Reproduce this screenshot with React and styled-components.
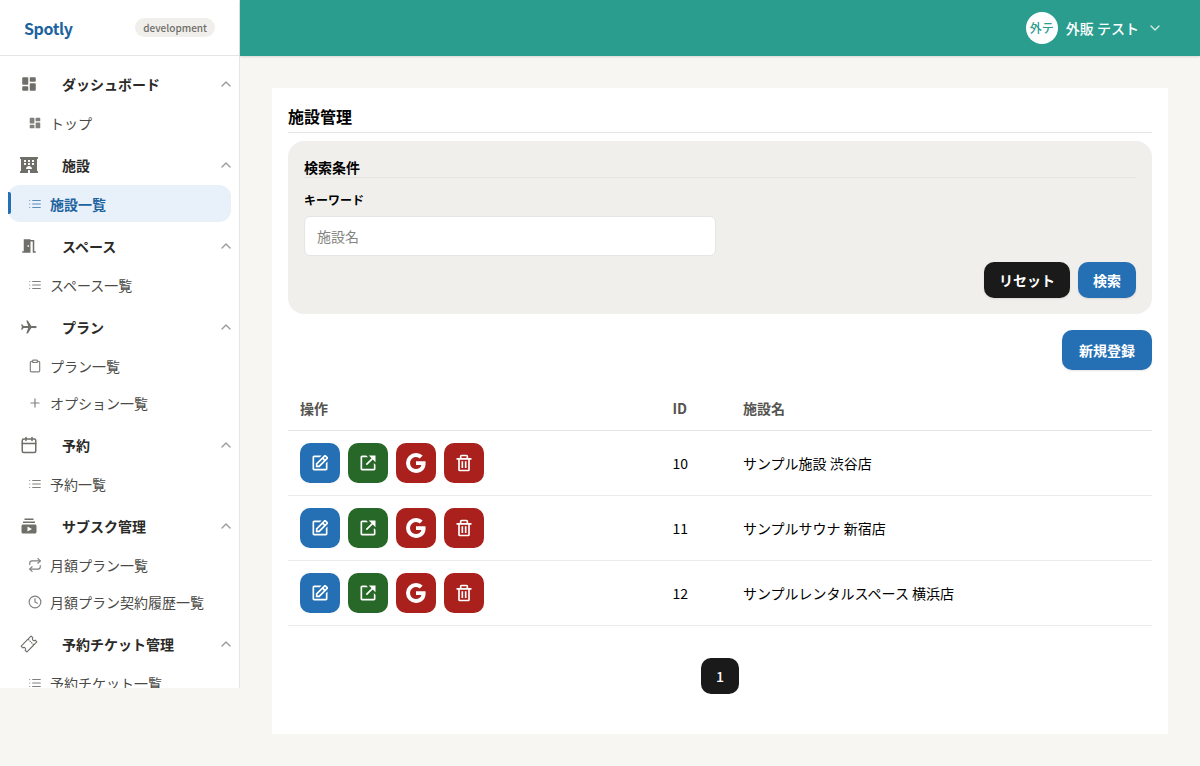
import React from "react";
import styled, { createGlobalStyle } from "styled-components";
import { RiDashboardFill } from "react-icons/ri";
import { FaHotel } from "react-icons/fa";
import { MdSubscriptions, MdMeetingRoom } from "react-icons/md";
import { IoIosAirplane } from "react-icons/io";
import { IoTicketOutline } from "react-icons/io5";
import {
  FiCalendar,
  FiChevronDown,
  FiChevronUp,
  FiClipboard,
  FiClock,
  FiList,
  FiPlus,
  FiRepeat,
} from "react-icons/fi";
import { BiEdit, BiLinkExternal, BiTrash } from "react-icons/bi";
import { BsGoogle } from "react-icons/bs";

const menu = [
  {
    title: "ダッシュボード",
    icon: RiDashboardFill,
    items: [{ label: "トップ", icon: RiDashboardFill }],
  },
  {
    title: "施設",
    icon: FaHotel,
    items: [{ label: "施設一覧", icon: FiList, active: true }],
  },
  {
    title: "スペース",
    icon: MdMeetingRoom,
    items: [{ label: "スペース一覧", icon: FiList }],
  },
  {
    title: "プラン",
    icon: IoIosAirplane,
    items: [
      { label: "プラン一覧", icon: FiClipboard },
      { label: "オプション一覧", icon: FiPlus },
    ],
  },
  {
    title: "予約",
    icon: FiCalendar,
    items: [{ label: "予約一覧", icon: FiList }],
  },
  {
    title: "サブスク管理",
    icon: MdSubscriptions,
    items: [
      { label: "月額プラン一覧", icon: FiRepeat },
      { label: "月額プラン契約履歴一覧", icon: FiClock },
    ],
  },
  {
    title: "予約チケット管理",
    icon: IoTicketOutline,
    items: [{ label: "予約チケット一覧", icon: FiList }],
  },
];

const facilities = [
  { id: 10, name: "サンプル施設 渋谷店" },
  { id: 11, name: "サンプルサウナ 新宿店" },
  { id: 12, name: "サンプルレンタルスペース 横浜店" },
];

function App() {
  return (
    <>
      <GlobalStyle />
      <Layout>
        <Sidebar>
          <Brand>
            <Logo>Spotly</Logo>
            <EnvBadge>development</EnvBadge>
          </Brand>
          <Nav>
            {menu.map((group) => (
              <div key={group.title}>
                <GroupHeader>
                  <group.icon size={18} />
                  <span>{group.title}</span>
                  <FiChevronUp size={16} />
                </GroupHeader>
                {group.items.map((item) => (
                  <NavItem key={item.label} $active={item.active}>
                    <item.icon size={14} />
                    <span>{item.label}</span>
                  </NavItem>
                ))}
              </div>
            ))}
          </Nav>
        </Sidebar>
        <Main>
          <Header>
            <Avatar>外テ</Avatar>
            <UserName>外販 テスト</UserName>
            <FiChevronDown size={16} />
          </Header>
          <Card>
            <Title>施設管理</Title>
            <SearchPanel>
              <SearchTitle>検索条件</SearchTitle>
              <Label>キーワード</Label>
              <Input placeholder="施設名" />
              <SearchActions>
                <Button $color="#1a1a1a">リセット</Button>
                <Button>検索</Button>
              </SearchActions>
            </SearchPanel>
            <CreateRow>
              <CreateButton>新規登録</CreateButton>
            </CreateRow>
            <Table>
              <thead>
                <tr>
                  <Th $width="372.5px">操作</Th>
                  <Th $width="70.5px">ID</Th>
                  <Th>施設名</Th>
                </tr>
              </thead>
              <tbody>
                {facilities.map((facility) => (
                  <tr key={facility.id}>
                    <Td>
                      <Actions>
                        <IconButton $color="#2570b5">
                          <BiEdit size={20} />
                        </IconButton>
                        <IconButton $color="#276727">
                          <BiLinkExternal size={20} />
                        </IconButton>
                        <IconButton $color="#a9201c">
                          <BsGoogle size={20} />
                        </IconButton>
                        <IconButton $color="#a9201c">
                          <BiTrash size={20} />
                        </IconButton>
                      </Actions>
                    </Td>
                    <Td>{facility.id}</Td>
                    <Td>{facility.name}</Td>
                  </tr>
                ))}
              </tbody>
            </Table>
            <Pagination>
              <Page>1</Page>
            </Pagination>
          </Card>
        </Main>
      </Layout>
    </>
  );
}

const GlobalStyle = createGlobalStyle`
  * {
    box-sizing: border-box;
  }
  body {
    margin: 0;
    background: #f7f6f3;
    color: #000;
    font-family: "Noto Sans CJK JP", sans-serif;
    font-size: 14px;
    line-height: 20px;
  }
  button,
  input {
    font: inherit;
  }
`;
const Layout = styled.div`
  display: flex;
  align-items: flex-start;
  height: 766px;
  overflow: hidden;
`;
const Sidebar = styled.aside`
  flex: none;
  width: 240px;
  height: 688px;
  overflow: hidden;
  background: #fff;
  border-right: 1px solid #e5e5e3;
`;
const Brand = styled.div`
  display: flex;
  align-items: center;
  justify-content: space-between;
  height: 56px;
  padding: 0 24px;
  border-bottom: 1px solid #e5e5e3;
`;
const Logo = styled.div`
  font-size: 16px;
  line-height: 24px;
  font-weight: 700;
  letter-spacing: -0.4px;
  color: #1d639f;
`;
const EnvBadge = styled.span`
  height: 19px;
  padding: 0 8px;
  border-radius: 10px;
  background: #f0efeb;
  color: #6f6e69;
  font-size: 10px;
  line-height: 19px;
  font-weight: 500;
`;
const Nav = styled.nav`
  padding: 8px 8px 0;
`;
const GroupHeader = styled.div`
  display: flex;
  align-items: center;
  height: 40px;
  padding-left: 12px;
  color: #6f6e69;

  div + div > & {
    margin-top: 4px;
  }
  span {
    flex: 1;
    margin-left: 24px;
    font-weight: 700;
    color: #2b2a27;
  }
  svg:last-child {
    margin-right: -3px;
    color: #9b9a96;
  }
`;
const NavItem = styled.div`
  position: relative;
  display: flex;
  align-items: center;
  gap: 8px;
  height: 37px;
  padding-left: 20px;
  border-radius: 12px;
  background: ${(props) => (props.$active ? "#e8f0f9" : "transparent")};
  color: ${(props) => (props.$active ? "#1d639f" : "#4b4a46")};
  font-weight: ${(props) => (props.$active ? 700 : 400)};
  white-space: nowrap;

  svg {
    opacity: 0.7;
  }
  &::before {
    content: "";
    display: ${(props) => (props.$active ? "block" : "none")};
    position: absolute;
    left: 0;
    top: 7px;
    width: 3px;
    height: 22px;
    border-radius: 0 2px 2px 0;
    background: #2570b5;
  }
`;
const Main = styled.main`
  flex: 1;
  min-width: 0;
`;
const Header = styled.header`
  display: flex;
  align-items: center;
  justify-content: flex-end;
  height: 56px;
  padding-right: 37px;
  background: #2a9d8f;
  color: #fff;
  box-shadow: 0 1px 2px rgba(0, 0, 0, 0.12);

  svg {
    margin-left: 8px;
    opacity: 0.8;
  }
`;
const Avatar = styled.div`
  width: 32px;
  height: 32px;
  border-radius: 50%;
  background: #fff;
  color: #2a9d8f;
  font-size: 12px;
  line-height: 32px;
  font-weight: 500;
  text-align: center;
`;
const UserName = styled.span`
  margin-left: 8px;
  font-weight: 500;
`;
const Card = styled.section`
  height: 646px;
  margin: 32px;
  padding: 16px;
  background: #fff;
`;
const Title = styled.h1`
  margin: 0 0 8px;
  height: 29px;
  border-bottom: 1px solid #e5e5e3;
  font-size: 16px;
  line-height: 24px;
  font-weight: 700;
`;
const SearchPanel = styled.div`
  height: 173px;
  padding: 16px;
  border-radius: 16px;
  background: #f0efeb;
`;
const SearchTitle = styled.h2`
  margin: 0;
  height: 21px;
  border-bottom: 1px solid #e5e5e3;
  font-size: 14px;
  line-height: 21px;
  font-weight: 700;
`;
const Label = styled.label`
  display: block;
  padding: 14px 0 8px;
  font-size: 12px;
  line-height: 16px;
  font-weight: 700;
`;
const Input = styled.input`
  display: block;
  width: 412px;
  height: 40px;
  padding: 0 12px;
  border: 1px solid #e5e5e3;
  border-radius: 6px;
  background: #fff;
  outline: none;

  &::placeholder {
    color: #84837e;
  }
`;
const SearchActions = styled.div`
  display: flex;
  justify-content: flex-end;
  gap: 8px;
  margin-top: 6px;
`;
const Button = styled.button`
  height: 36px;
  padding: 0 15px 1px;
  border: none;
  border-radius: 10px;
  background: ${(props) => props.$color || "#2570b5"};
  color: #fff;
  font-weight: 700;
  box-shadow: 0 1px 2px rgba(0, 0, 0, 0.1);
`;
const CreateButton = styled(Button)`
  height: 40px;
  padding: 0 17px 1px;
`;
const CreateRow = styled.div`
  display: flex;
  justify-content: flex-end;
  padding: 16px 0;
`;
const Table = styled.table`
  width: 100%;
  table-layout: fixed;
  border-collapse: separate;
  border-spacing: 0;
`;
const Th = styled.th`
  width: ${(props) => props.$width || "auto"};
  height: 45px;
  padding: 0 12px;
  border-bottom: 1px solid #e5e5e3;
  color: #55544f;
  font-weight: 700;
  text-align: left;
`;
const Td = styled.td`
  height: 65px;
  padding: 0 12px;
  border-bottom: 1px solid #ecebe9;
`;
const Actions = styled.div`
  display: flex;
  gap: 8px;
`;
const IconButton = styled.button`
  display: flex;
  align-items: center;
  justify-content: center;
  width: 40px;
  height: 40px;
  padding: 0;
  border: none;
  border-radius: 10px;
  background: ${(props) => props.$color};
  color: #fff;
`;
const Pagination = styled.div`
  display: flex;
  justify-content: center;
  padding-top: 32px;
`;
const Page = styled.button`
  width: 38px;
  height: 36px;
  padding: 0;
  border: none;
  border-radius: 10px;
  background: #1a1a1a;
  color: #fff;
  font-weight: 500;
`;

export default App;
